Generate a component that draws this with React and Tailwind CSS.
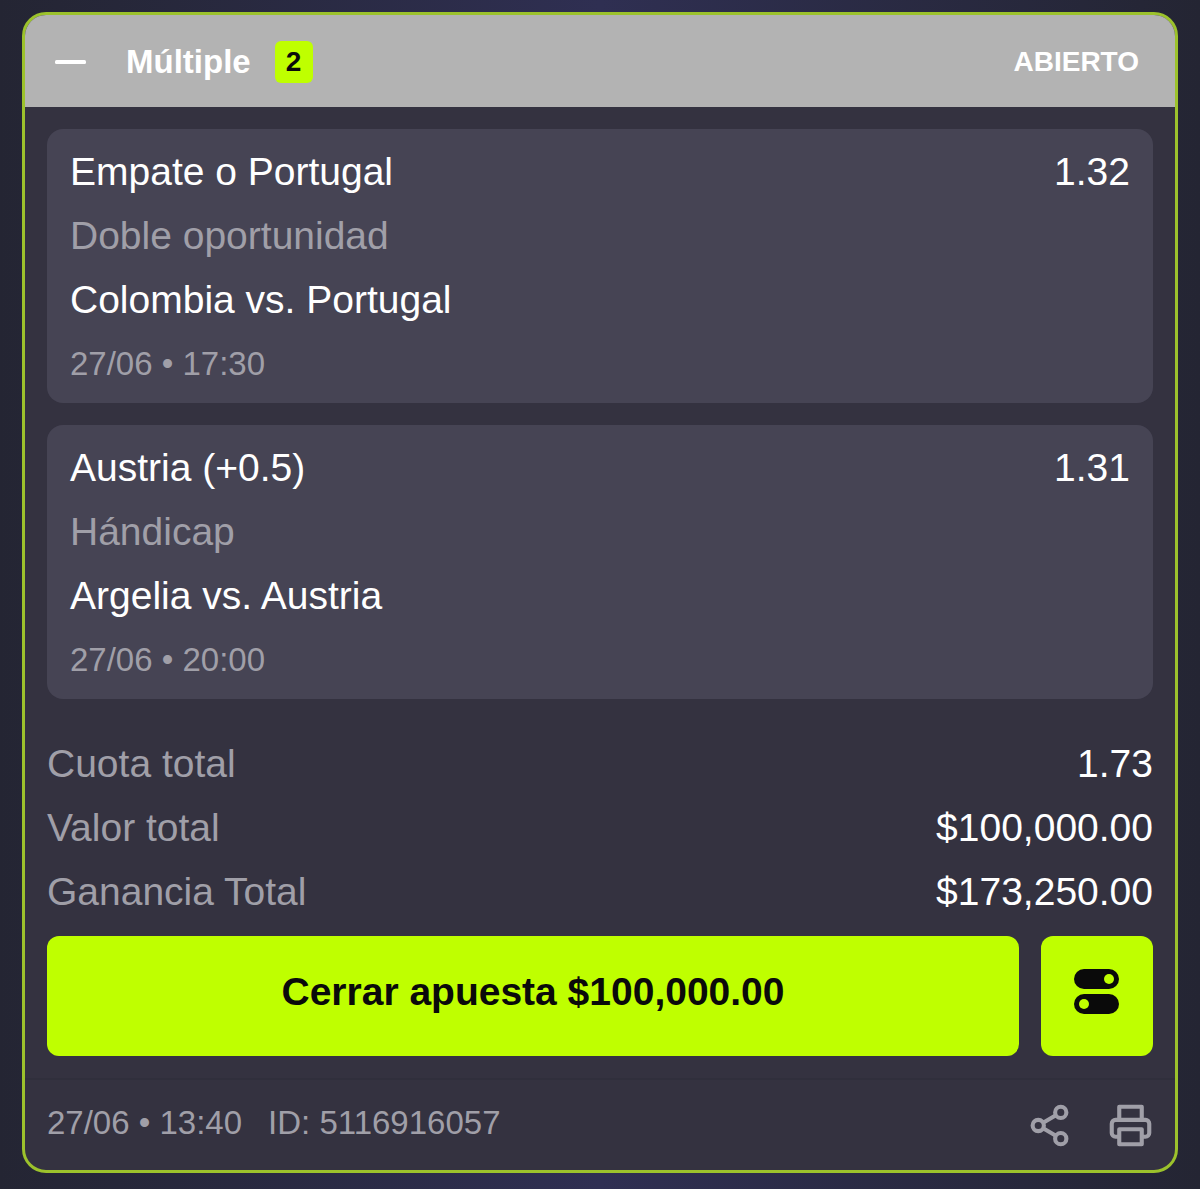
const picks = [
  {
    id: 1,
    selection: "Empate o Portugal",
    market: "Doble oportunidad",
    match: "Colombia vs. Portugal",
    date: "27/06 • 17:30",
    odds: "1.32",
  },
  {
    id: 2,
    selection: "Austria (+0.5)",
    market: "Hándicap",
    match: "Argelia vs. Austria",
    date: "27/06 • 20:00",
    odds: "1.31",
  },
];

const totals = [
  { label: "Cuota total", value: "1.73" },
  { label: "Valor total", value: "$100,000.00" },
  { label: "Ganancia Total", value: "$173,250.00" },
];

function MinusIcon() {
  return (
    <svg width="31" height="4" viewBox="0 0 31 4" aria-hidden="true">
      <rect width="31" height="4" rx="1.5" fill="currentColor" />
    </svg>
  );
}

function TogglesIcon() {
  return (
    <svg width="46" height="46" viewBox="0 0 46 46" aria-hidden="true">
      <rect width="45" height="20" rx="10" fill="#0a0a0a" />
      <circle cx="35" cy="10" r="5" fill="#bfff00" />
      <rect y="25" width="45" height="20" rx="10" fill="#0a0a0a" />
      <circle cx="10" cy="35" r="5" fill="#bfff00" />
    </svg>
  );
}

function ShareIcon() {
  return (
    <svg
      width="45"
      height="45"
      viewBox="0 0 24 24"
      fill="none"
      stroke="currentColor"
      strokeWidth={2.2}
      aria-hidden="true"
    >
      <circle cx="18" cy="5" r="3" />
      <circle cx="6" cy="12" r="3" />
      <circle cx="18" cy="19" r="3" />
      <path d="M8.59 13.51l6.83 3.98M15.41 6.51l-6.82 3.98" />
    </svg>
  );
}

function PrinterIcon() {
  return (
    <svg
      width="45"
      height="45"
      viewBox="0 0 24 24"
      fill="none"
      stroke="currentColor"
      strokeWidth={2.2}
      strokeLinejoin="round"
      aria-hidden="true"
    >
      <path d="M6 9V2h12v7" />
      <path d="M6 18H4a2 2 0 0 1-2-2v-5a2 2 0 0 1 2-2h16a2 2 0 0 1 2 2v5a2 2 0 0 1-2 2h-2" />
      <path d="M6 14h12v8H6z" />
    </svg>
  );
}

function PickCard({ pick }) {
  return (
    <li className="flex items-start justify-between rounded-2xl bg-[#464454] px-[23px] pt-[11px] pb-[7px] leading-[64px]">
      <div>
        <p>{pick.selection}</p>
        <p className="text-[#a09fa8]">{pick.market}</p>
        <p>{pick.match}</p>
        <p className="text-[33px] leading-[64px] text-[#a09fa8]">{pick.date}</p>
      </div>
      <span>{pick.odds}</span>
    </li>
  );
}

export default function App() {
  return (
    <main className="min-h-screen bg-linear-to-r from-[#242533] via-[#2f2f52] to-[#242533] px-[22px] pt-3 pb-4 font-['Liberation_Sans',Arial,sans-serif] text-[39px] text-white">
      <article className="overflow-hidden rounded-[24px] border-3 border-[#9cc22c] bg-[#343240]">
        <header className="flex h-[92px] items-center bg-[#b3b3b3] pt-0.5 pr-9 pl-[30px] font-bold">
          <button type="button" aria-label="Contraer" className="mr-10 py-4">
            <MinusIcon />
          </button>
          <h1 className="mr-6 text-[33px]">Múltiple</h1>
          <span className="flex h-[42px] w-[38px] items-center justify-center rounded-md bg-[#bfff00] text-[28px] text-[#0a0a0a]">
            2
          </span>
          <span className="ml-auto text-[28px]">ABIERTO</span>
        </header>

        <div className="px-[22px] py-[22px]">
          <ul className="flex flex-col gap-[22px]">
            {picks.map((pick) => (
              <PickCard key={pick.id} pick={pick} />
            ))}
          </ul>

          <dl className="mt-[33px] mb-3 leading-[64px]">
            {totals.map((row) => (
              <div key={row.label} className="flex justify-between">
                <dt className="text-[#a09fa8]">{row.label}</dt>
                <dd>{row.value}</dd>
              </div>
            ))}
          </dl>

          <div className="flex gap-[22px]">
            <button
              type="button"
              className="h-[120px] flex-1 rounded-xl bg-[#bfff00] pb-2 font-bold text-[#0a0a0a]"
            >
              Cerrar apuesta $100,000.00
            </button>
            <button
              type="button"
              aria-label="Opciones de cierre"
              className="flex h-[120px] w-28 items-center justify-center rounded-xl bg-[#bfff00] pb-2"
            >
              <TogglesIcon />
            </button>
          </div>
        </div>

        <footer className="flex h-[92px] items-center border-t-2 border-[#302f3c] px-[22px] text-[33px] text-[#a09fa8]">
          <p className="flex gap-[26px] pb-1">
            <span>27/06 • 13:40</span>
            <span>ID: 5116916057</span>
          </p>
          <div className="ml-auto flex gap-9">
            <button type="button" aria-label="Compartir">
              <ShareIcon />
            </button>
            <button type="button" aria-label="Imprimir">
              <PrinterIcon />
            </button>
          </div>
        </footer>
      </article>
    </main>
  );
}
